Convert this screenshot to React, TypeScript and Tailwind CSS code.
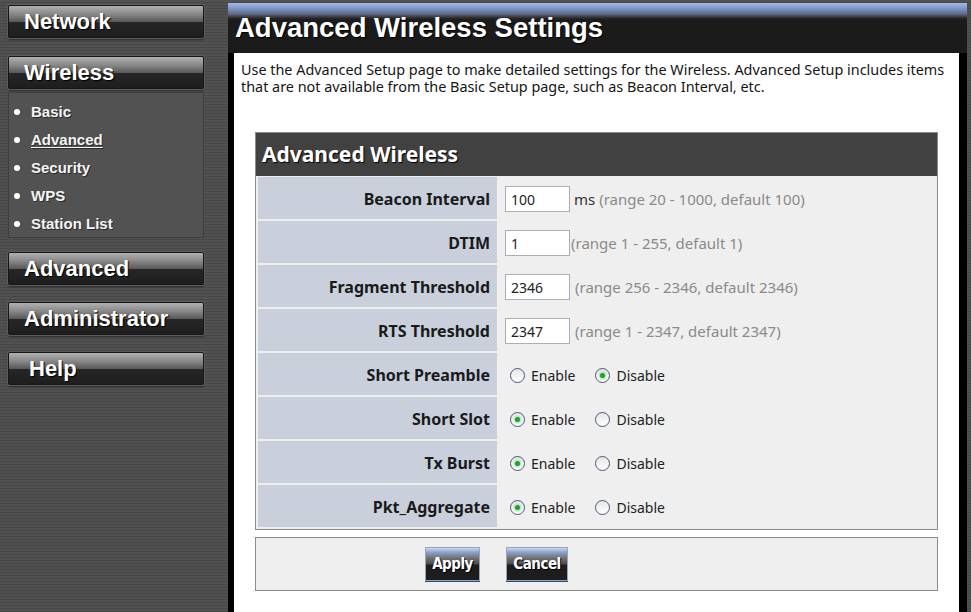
// Router admin page: Wireless > Advanced settings.

const STRIPES =
  "bg-[repeating-linear-gradient(to_bottom,#515151_0px,#515151_2px,#474747_2px,#474747_3px)]"
const UI_FONT = "font-['Noto_Sans',sans-serif]"
const NAV_FONT = "font-['Liberation_Sans',Arial,sans-serif]"

const NAV_BTN =
  "flex h-[33px] w-[196px] items-center rounded-[2px] border border-[#161616] bg-[linear-gradient(to_bottom,#b0b0b0_0%,#8a8a8a_25%,#5a5a5a_50%,#262626_53%,#1e1e1e_100%)] shadow-[0_0_0_1px_#5c5c5c,0_2px_2px_#2a2a2a] text-[22px] font-bold leading-[31px] text-white [text-shadow:1px_1px_1px_#000]"

const FORM_BTN =
  "flex h-[34px] items-center justify-center border border-[#9aa6b8] bg-[linear-gradient(to_bottom,#c8dbf5_0%,#8fa7cf_12%,#6f6f6f_32%,#4c4c4c_50%,#1d1d1d_53%,#1d1d1d_100%)] shadow-[0_1px_0_#2c4a7a] font-['Liberation_Sans_Narrow','DejaVu_Sans_Condensed','Liberation_Sans',sans-serif] text-[15px] font-bold tracking-[-0.5px] text-white [text-shadow:1px_1px_0_#000]"

const SUB_ITEMS = [
  { label: "Basic", active: false },
  { label: "Advanced", active: true },
  { label: "Security", active: false },
  { label: "WPS", active: false },
  { label: "Station List", active: false },
]

const FIELD_ROWS = [
  { label: "Beacon Interval", value: "100", unit: "ms", hint: "(range 20 - 1000, default 100)", gap: "ml-[4px]" },
  { label: "DTIM", value: "1", unit: "", hint: "(range 1 - 255, default 1)", gap: "ml-[1px]" },
  { label: "Fragment Threshold", value: "2346", unit: "", hint: "(range 256 - 2346, default 2346)", gap: "ml-[5px]" },
  { label: "RTS Threshold", value: "2347", unit: "", hint: "(range 1 - 2347, default 2347)", gap: "ml-[5px]" },
]

const TOGGLE_ROWS = [
  { label: "Short Preamble", enabled: false },
  { label: "Short Slot", enabled: true },
  { label: "Tx Burst", enabled: true },
  { label: "Pkt_Aggregate", enabled: true },
]

function NavButton({ label, indent = "pl-[15px]" }: { label: string; indent?: string }) {
  return <div className={`${NAV_BTN} ${indent}`}>{label}</div>
}

function Radio({ checked, label }: { checked: boolean; label: string }) {
  return (
    <span className="flex items-center">
      <span className="flex h-[15px] w-[15px] items-center justify-center rounded-full border border-[#4a5875] bg-[linear-gradient(to_bottom,#e6e6e6,#ffffff)]">
        {checked ? (
          <span className="h-[5px] w-[5px] rounded-full bg-[#23a032] shadow-[0_0_2px_1px_#9fe0a6]" />
        ) : null}
      </span>
      <span className="ml-[6px] text-[14px] text-[#222]">{label}</span>
    </span>
  )
}

function LabelCell({ children }: { children: string }) {
  return (
    <div className="flex h-[42px] items-center justify-end bg-[#c9d0dc] pr-[7px] pt-[1px] text-[16px] font-bold text-[#1a1a1a]">
      {children}
    </div>
  )
}

export default function App() {
  return (
    <div className={`flex min-h-[612px] w-full ${STRIPES}`}>
      {/* left menu */}
      <aside className={`w-[228px] shrink-0 pl-[8px] pt-[5px] ${NAV_FONT}`}>
        <NavButton label="Network" />
        <div className="mt-[18px]">
          <NavButton label="Wireless" />
        </div>
        <ul className="mt-[3px] h-[146px] w-[196px] border border-[#3e3e3e] bg-[#525252] pt-[5px] pl-[5px]">
          {SUB_ITEMS.map((item) => (
            <li key={item.label} className="flex h-[28px] items-center">
              <span className="h-[6px] w-[6px] rounded-full bg-white" />
              <span
                className={`ml-[11px] text-[15px] font-bold text-[#f4f4f4] [text-shadow:1px_1px_0_#2a2a2a] ${
                  item.active ? "underline underline-offset-2" : ""
                }`}
              >
                {item.label}
              </span>
            </li>
          ))}
        </ul>
        <div className="mt-[14px]">
          <NavButton label="Advanced" />
        </div>
        <div className="mt-[17px]">
          <NavButton label="Administrator" />
        </div>
        <div className="mt-[17px]">
          <NavButton label="Help" indent="pl-[20px]" />
        </div>
      </aside>

      {/* main panel */}
      <main className="mr-[4px] mt-[3px] flex min-w-0 flex-1 flex-col">
        <div className="h-[50px] bg-[linear-gradient(to_bottom,#a3bbe8_0px,#8199cb_5px,#5e6a86_11px,#2a2a2a_15px,#1b1b1b_17px,#1b1b1b_100%)] pl-[7px] pt-[11px]">
          <h1 className={`${NAV_FONT} text-[27.5px] font-bold leading-none text-white [text-shadow:1px_1px_1px_#000]`}>
            Advanced Wireless Settings
          </h1>
        </div>

        <div className={`flex-1 border-l-[6px] border-r-[8px] border-black bg-white pb-[20px] ${UI_FONT}`}>
          <p className="pl-[7px] pr-[4px] pt-[9px] text-[14.4px] leading-[16.5px] text-[#151515]">
            Use the Advanced Setup page to make detailed settings for the Wireless. Advanced Setup includes items
            that are not available from the Basic Setup page, such as Beacon Interval, etc.
          </p>

          <section className="mx-[21px] mt-[37px] border border-[#8a8a8a] bg-[#efefef]">
            <div className="flex h-[43px] items-center bg-[#414141] pl-[6px] text-[21px] font-bold text-white [text-shadow:1px_1px_1px_#000]">
              Advanced Wireless
            </div>
            <div className="grid grid-cols-[239px_1fr] gap-[2px] p-[2px] pt-[1px]">
              {FIELD_ROWS.map((row) => (
                <div key={row.label} className="contents">
                  <LabelCell>{row.label}</LabelCell>
                  <div className="flex h-[42px] items-center pl-[6px] pt-[2px] text-[15px]">
                    <span className="flex h-[26px] w-[65px] items-center border border-[#a9afb8] bg-white px-[5px] text-[14px] text-[#222]">
                      {row.value}
                    </span>
                    <span className={`${row.gap} text-[#8a8a8a]`}>
                      {row.unit ? <span className="text-[#333]">{row.unit} </span> : null}
                      {row.hint}
                    </span>
                  </div>
                </div>
              ))}
              {TOGGLE_ROWS.map((row) => (
                <div key={row.label} className="contents">
                  <LabelCell>{row.label}</LabelCell>
                  <div className="flex h-[42px] items-center gap-[20px] pl-[11px] pt-[2px]">
                    <Radio checked={row.enabled} label="Enable" />
                    <Radio checked={!row.enabled} label="Disable" />
                  </div>
                </div>
              ))}
            </div>
          </section>

          <div className="mx-[21px] mt-[7px] flex h-[54px] items-center gap-[26px] border border-[#8a8a8a] bg-[#efefef] pl-[169px]">
            <button type="button" className={`${FORM_BTN} w-[55px]`}>
              Apply
            </button>
            <button type="button" className={`${FORM_BTN} w-[62px]`}>
              Cancel
            </button>
          </div>
        </div>
      </main>
    </div>
  )
}
